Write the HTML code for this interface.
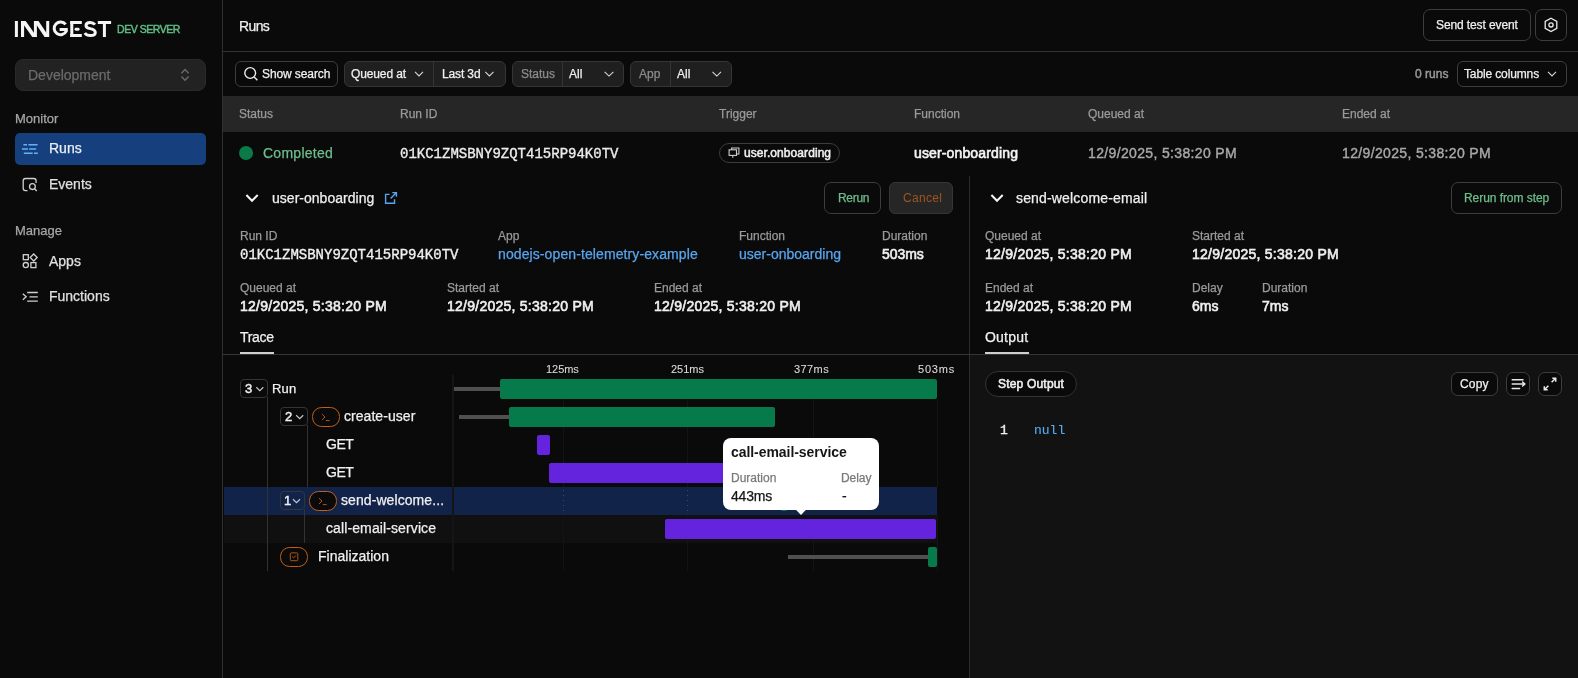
<!DOCTYPE html>
<html><head><meta charset="utf-8">
<style>
*{box-sizing:border-box;margin:0;padding:0}
html,body{width:1578px;height:678px;overflow:hidden;background:#0a0a0a;font-family:"Liberation Sans",sans-serif;color:#e5e5e5}
.a{position:absolute}
.t{position:absolute;white-space:nowrap;line-height:1;-webkit-text-stroke:0.25px currentColor}
.mono{font-family:"Liberation Mono",monospace;-webkit-text-stroke:0.35px currentColor}
.lbl{color:#9a9a9a;font-size:12px}
.val{color:#f0f0f0;font-size:14px;font-weight:400;-webkit-text-stroke:0.6px currentColor !important}
.btn{position:absolute;border:1px solid #3d3d3d;border-radius:7px;background:#0a0a0a}
.hl{position:absolute;background:#2c2c2c}
svg{position:absolute;overflow:visible}
</style></head><body><div style="position:absolute;left:0;top:0;width:1578px;height:678px;will-change:transform">

<!-- SIDEBAR -->
<div class="a" style="left:222px;top:0;width:1px;height:678px;background:#303030"></div>
<svg style="left:0;top:0" width="1" height="1"><g fill="#f5f5f5">
<rect x="14.9" y="21" width="3" height="16"/>
<rect x="21" y="21" width="3.1" height="16"/>
<path d="M21 21H25.7L36.9 37H32.3Z"/>
<rect x="33.9" y="21" width="3" height="16"/>
<path d="M33.9 21H38.5L49.2 37H44.6Z"/>
<rect x="46.2" y="21" width="3" height="16"/>
<rect x="70.3" y="21" width="3" height="16"/><rect x="70.3" y="21" width="11.5" height="3"/><rect x="70.3" y="34" width="11.5" height="3"/><rect x="74.6" y="27.8" width="5" height="2.9" rx="1.4"/>
<rect x="97.8" y="21" width="13.3" height="3"/><rect x="102.9" y="21" width="3" height="16"/>
</g><g fill="none" stroke="#f5f5f5" stroke-width="3">
<path d="M65.6 24.4A6.4 6.4 0 1 0 66.3 31.2V29.5H59.6"/>
<path d="M95 24.6Q93.2 22.4 90.2 22.4Q86 22.4 86 25.4Q86 27.8 90.2 28.6Q95.3 29.6 95.3 32.6Q95.3 35.6 90.4 35.6Q86.6 35.6 84.8 33"/>
</g></svg>
<div class="t" style="left:117px;top:23.5px;font-size:10.5px;color:#5fbf84;-webkit-text-stroke:0.45px currentColor;letter-spacing:-0.45px">DEV SERVER</div>

<div class="a" style="left:15px;top:59px;width:191px;height:32px;background:#222;border:1px solid #2a2a2a;border-radius:8px"></div>
<div class="t" style="left:28px;top:68px;font-size:14px;color:#6b6b6b">Development</div>
<svg style="left:0;top:0" width="1" height="1"><path d="M181.5 73.3L185 69.6L188.6 73.3M181.5 76.6L185 80.2L188.6 76.6" fill="none" stroke="#6a6a6a" stroke-width="1.4"/></svg>

<div class="t" style="left:15px;top:112px;font-size:13px;color:#a6a6a6">Monitor</div>
<div class="a" style="left:15px;top:133px;width:191px;height:32px;background:#163f7e;border-radius:5px"></div>
<svg style="left:0;top:0" width="1" height="1"><g stroke="#62b2f6" stroke-width="1.4" fill="none">
<path d="M23.4 144.7H27M28.4 144.7H37.6M22 149H28M29.2 149H36.2M23.8 153.2H32.7M34 153.2H37.8"/></g></svg>
<div class="t" style="left:49px;top:141px;font-size:14px;color:#e8eef6">Runs</div>

<svg style="left:0;top:0" width="1" height="1"><g stroke="#d0d0d0" stroke-width="1.3" fill="none">
<path d="M27.5 190.6H25.5Q23.2 190.6 23.2 188.3V180.8Q23.2 178.5 25.5 178.5H33.8Q36.1 178.5 36.1 180.8V183"/>
<circle cx="32.4" cy="186.6" r="2.9"/><path d="M34.5 188.7L36.8 191"/></g></svg>
<div class="t" style="left:49px;top:177px;font-size:14px;color:#e0e0e0">Events</div>

<div class="t" style="left:15px;top:224px;font-size:13px;color:#a6a6a6">Manage</div>
<svg style="left:0;top:0" width="1" height="1"><g stroke="#d0d0d0" stroke-width="1.3" fill="none">
<rect x="23.3" y="254.7" width="5" height="5"/><path d="M33.7 254L37.2 257.5L33.7 261L30.2 257.5Z"/>
<circle cx="25.8" cy="265.1" r="2.6"/><rect x="30.9" y="262.6" width="5" height="5"/></g></svg>
<div class="t" style="left:49px;top:254px;font-size:14px;color:#e0e0e0">Apps</div>

<svg style="left:0;top:0" width="1" height="1"><g stroke="#d0d0d0" stroke-width="1.3" fill="none">
<path d="M22.8 293.8L26.2 296.8L22.8 299.8M27.2 292.5H37.8M29.5 296.8H37.8M27.2 301.1H37.8"/></g></svg>
<div class="t" style="left:49px;top:289px;font-size:14px;color:#e0e0e0">Functions</div>

<!-- MAIN HEADER -->
<div class="t" style="left:239px;top:19px;font-size:14px;color:#f0f0f0;letter-spacing:-0.63px">Runs</div>
<div class="a" style="left:223px;top:51px;width:1355px;height:1px;background:#333"></div>
<div class="btn" style="left:1423px;top:9px;width:108px;height:32px"></div>
<div class="t" style="left:1436px;top:19px;font-size:12px;color:#f0f0f0;letter-spacing:-0.11px">Send test event</div>
<div class="btn" style="left:1535px;top:9px;width:32px;height:32px"></div>
<svg style="left:0;top:0" width="1" height="1"><g stroke="#ececec" stroke-width="1.3" fill="none">
<path d="M1551 18.3L1556.8 21.5V28.3L1551 31.5L1545.2 28.3V21.5Z"/><circle cx="1551" cy="24.9" r="2.1"/></g></svg>

<!-- FILTER BAR -->
<div class="btn" style="left:235px;top:61px;width:103px;height:26px;border-radius:6px"></div>
<svg style="left:0;top:0" width="1" height="1"><g stroke="#ececec" stroke-width="1.4" fill="none">
<circle cx="250.2" cy="73" r="5.4"/><path d="M254.2 77L257.4 80.2"/></g></svg>
<div class="t" style="left:262px;top:68px;font-size:12px;color:#f0f0f0;letter-spacing:-0.1px">Show search</div>

<div class="btn" style="left:344px;top:61px;width:162px;height:26px;border-radius:6px;background:#1f1f1f;border-color:#353535"></div>
<div class="a" style="left:433px;top:62px;width:1px;height:24px;background:#353535"></div>
<div class="t" style="left:351px;top:68px;font-size:12px;color:#f0f0f0;letter-spacing:-0.13px">Queued at</div>
<div class="t" style="left:442px;top:68px;font-size:12px;color:#f0f0f0;letter-spacing:-0.13px">Last 3d</div>

<div class="btn" style="left:512px;top:61px;width:112px;height:26px;border-radius:6px;background:#1f1f1f;border-color:#353535"></div>
<div class="a" style="left:562px;top:62px;width:1px;height:24px;background:#353535"></div>
<div class="t" style="left:521px;top:68px;font-size:12px;color:#8c8c8c">Status</div>
<div class="t" style="left:569px;top:68px;font-size:12px;color:#f0f0f0">All</div>

<div class="btn" style="left:630px;top:61px;width:102px;height:26px;border-radius:6px;background:#1f1f1f;border-color:#353535"></div>
<div class="a" style="left:670px;top:62px;width:1px;height:24px;background:#353535"></div>
<div class="t" style="left:639px;top:68px;font-size:12px;color:#8c8c8c">App</div>
<div class="t" style="left:677px;top:68px;font-size:12px;color:#f0f0f0">All</div>
<svg style="left:0;top:0" width="1" height="1"><g stroke="#d8d8d8" stroke-width="1.1" fill="none">
<path d="M415 71.9L419 75.9L423 71.9M485.3 71.9L489.4 75.9L493.5 71.9M604.6 71.9L609 76.1L613.4 71.9M712.5 71.9L716.8 76.1L721 71.9"/></g></svg>

<div class="t" style="left:1415px;top:68px;font-size:12px;color:#9a9a9a;-webkit-text-stroke:0.45px currentColor;letter-spacing:0.04px">0 runs</div>
<div class="btn" style="left:1457px;top:61px;width:110px;height:26px;border-radius:6px"></div>
<div class="t" style="left:1464px;top:68px;font-size:12px;color:#f0f0f0;letter-spacing:-0.13px">Table columns</div>
<svg style="left:0;top:0" width="1" height="1"><path d="M1548 71.9L1552 75.9L1556 71.9" fill="none" stroke="#d8d8d8" stroke-width="1.1"/></svg>

<!-- TABLE HEADER -->
<div class="a" style="left:223px;top:96px;width:1355px;height:36px;background:#262626"></div>
<div class="t lbl" style="left:239px;top:108px">Status</div>
<div class="t lbl" style="left:400px;top:108px">Run ID</div>
<div class="t lbl" style="left:719px;top:108px">Trigger</div>
<div class="t lbl" style="left:914px;top:108px">Function</div>
<div class="t lbl" style="left:1088px;top:108px">Queued at</div>
<div class="t lbl" style="left:1342px;top:108px">Ended at</div>

<!-- ROW -->
<div class="a" style="left:239px;top:146px;width:14px;height:14px;border-radius:50%;background:#0a7a47"></div>
<div class="t" style="left:263px;top:146px;font-size:14px;color:#6dbd8b;letter-spacing:0.26px">Completed</div>
<div class="t mono" style="left:400px;top:147px;font-size:14px;color:#ececec">01KC1ZMSBNY9ZQT415RP94K0TV</div>
<div class="a" style="left:719px;top:143px;width:121px;height:20px;border:1px solid #3d3d3d;border-radius:10px"></div>
<svg style="left:0;top:0" width="1" height="1"><g stroke="#d0d0d0" stroke-width="1.1" fill="none">
<path d="M731.6 149.8V148H738.9V154H736.5"/><rect x="729.1" y="149.8" width="7.4" height="5.6"/><path d="M732.8 155.4V157.8"/></g></svg>
<div class="t" style="left:744px;top:147px;font-size:12px;color:#f0f0f0;-webkit-text-stroke:0.5px currentColor;letter-spacing:0.07px">user.onboarding</div>
<div class="t" style="left:914px;top:146px;font-size:14px;color:#f5f5f5;-webkit-text-stroke:0.6px currentColor;letter-spacing:0.14px">user-onboarding</div>
<div class="t" style="left:1088px;top:146px;font-size:14px;color:#a8a8a8;-webkit-text-stroke:0.4px currentColor;letter-spacing:0.35px">12/9/2025, 5:38:20 PM</div>
<div class="t" style="left:1342px;top:146px;font-size:14px;color:#a8a8a8;-webkit-text-stroke:0.4px currentColor;letter-spacing:0.35px">12/9/2025, 5:38:20 PM</div>

<!-- DIVIDER -->
<div class="a" style="left:969px;top:176px;width:1px;height:502px;background:#2c2c2c"></div>

<!-- LEFT DETAIL -->
<svg style="left:0;top:0" width="1" height="1"><path d="M246.4 195L252 200.8L257.7 195" fill="none" stroke="#f5f5f5" stroke-width="2"/></svg>
<div class="t" style="left:272px;top:191px;font-size:14px;color:#f0f0f0;letter-spacing:0.02px">user-onboarding</div>
<svg style="left:0;top:0" width="1" height="1"><g stroke="#58a6ef" stroke-width="1.4" fill="none">
<path d="M389.5 194.4H385.6V203.3H394.5V199.3M390.6 198.4L396.2 192.8M392.3 192.6H396.4V196.7"/></g></svg>
<div class="btn" style="left:824px;top:182px;width:57px;height:32px"></div>
<div class="t" style="left:838px;top:192px;font-size:12px;color:#6dbd8b;letter-spacing:-0.3px">Rerun</div>
<div class="a" style="left:889px;top:182px;width:64px;height:32px;background:#262626;border:1px solid #363636;border-radius:6px"></div>
<div class="t" style="left:903px;top:192px;font-size:12px;color:#a0541f;-webkit-text-stroke:0px;letter-spacing:0.3px">Cancel</div>

<div class="t lbl" style="left:240px;top:230px">Run ID</div>
<div class="t mono" style="left:240px;top:248px;font-size:14px;color:#f0f0f0">01KC1ZMSBNY9ZQT415RP94K0TV</div>
<div class="t lbl" style="left:498px;top:230px">App</div>
<div class="t" style="left:498px;top:247px;font-size:14px;color:#58a6ef;letter-spacing:0.1px">nodejs-open-telemetry-example</div>
<div class="t lbl" style="left:739px;top:230px">Function</div>
<div class="t" style="left:739px;top:247px;font-size:14px;color:#58a6ef;letter-spacing:0.0px">user-onboarding</div>
<div class="t lbl" style="left:882px;top:230px">Duration</div>
<div class="t val" style="left:882px;top:247px;letter-spacing:-0.05px">503ms</div>

<div class="t lbl" style="left:240px;top:282px">Queued at</div>
<div class="t val" style="left:240px;top:299px;letter-spacing:0.25px">12/9/2025, 5:38:20 PM</div>
<div class="t lbl" style="left:447px;top:282px">Started at</div>
<div class="t val" style="left:447px;top:299px;letter-spacing:0.25px">12/9/2025, 5:38:20 PM</div>
<div class="t lbl" style="left:654px;top:282px">Ended at</div>
<div class="t val" style="left:654px;top:299px;letter-spacing:0.25px">12/9/2025, 5:38:20 PM</div>

<div class="t" style="left:240px;top:330px;font-size:14px;color:#f0f0f0;letter-spacing:-0.3px">Trace</div>
<div class="a" style="left:223px;top:354px;width:1355px;height:1px;background:#353535"></div>
<div class="a" style="left:240px;top:352px;width:34px;height:2px;background:#cfcfcf"></div>

<!-- RIGHT DETAIL -->
<svg style="left:0;top:0" width="1" height="1"><path d="M991.4 195L997 200.8L1002.7 195" fill="none" stroke="#f5f5f5" stroke-width="2"/></svg>
<div class="t" style="left:1016px;top:191px;font-size:14px;color:#f0f0f0;letter-spacing:0.16px">send-welcome-email</div>
<div class="btn" style="left:1451px;top:182px;width:111px;height:32px"></div>
<div class="t" style="left:1464px;top:192px;font-size:12px;color:#6dbd8b;letter-spacing:-0.06px">Rerun from step</div>

<div class="t lbl" style="left:985px;top:230px">Queued at</div>
<div class="t val" style="left:985px;top:247px;letter-spacing:0.25px">12/9/2025, 5:38:20 PM</div>
<div class="t lbl" style="left:1192px;top:230px">Started at</div>
<div class="t val" style="left:1192px;top:247px;letter-spacing:0.25px">12/9/2025, 5:38:20 PM</div>
<div class="t lbl" style="left:985px;top:282px">Ended at</div>
<div class="t val" style="left:985px;top:299px;letter-spacing:0.25px">12/9/2025, 5:38:20 PM</div>
<div class="t lbl" style="left:1192px;top:282px">Delay</div>
<div class="t val" style="left:1192px;top:299px">6ms</div>
<div class="t lbl" style="left:1262px;top:282px">Duration</div>
<div class="t val" style="left:1262px;top:299px">7ms</div>

<div class="t" style="left:985px;top:330px;font-size:14px;color:#f0f0f0;letter-spacing:0.2px">Output</div>
<div class="a" style="left:985px;top:352px;width:44px;height:2px;background:#cfcfcf"></div>

<!-- OUTPUT AREA -->
<div class="a" style="left:970px;top:355px;width:608px;height:323px;background:#121212"></div>
<div class="a" style="left:985px;top:371px;width:92px;height:26px;background:#0a0a0a;border:1px solid #333;border-radius:13px"></div>
<div class="t" style="left:998px;top:378px;font-size:12px;color:#f0f0f0;-webkit-text-stroke:0.55px currentColor;letter-spacing:0.19px">Step Output</div>
<div class="btn" style="left:1451px;top:372px;width:47px;height:24px;border-radius:7px"></div>
<div class="t" style="left:1460px;top:378px;font-size:12px;color:#f0f0f0;letter-spacing:0.16px">Copy</div>
<div class="btn" style="left:1506px;top:372px;width:24px;height:24px;border-radius:7px"></div>
<div class="btn" style="left:1538px;top:372px;width:24px;height:24px;border-radius:7px"></div>
<svg style="left:0;top:0" width="1" height="1"><g stroke="#e8e8e8" stroke-width="1.5" fill="none" stroke-linecap="round">
<path d="M1512.2 379.7H1523M1512.2 384H1524.6M1512.2 388.4H1519.6M1522.6 382L1524.8 384L1522.6 386"/>
<path stroke-linecap="butt" d="M1551.6 382.3L1555.4 378.5M1552.3 378.3H1555.7V381.7M1548.4 385.7L1544.6 389.5M1544.3 386.3V389.7H1547.7"/></g></svg>
<div class="t mono" style="left:1000px;top:424px;font-size:13px;color:#f0f0f0">1</div>
<div class="t mono" style="left:1034px;top:424px;font-size:13px;color:#5aaaf2;-webkit-text-stroke:0.1px currentColor">null</div>

<!-- TRACE -->
<div class="t" style="left:546px;top:364px;font-size:11px;color:#d8d8d8;-webkit-text-stroke:0.1px currentColor;letter-spacing:-0.05px">125ms</div>
<div class="t" style="left:671px;top:364px;font-size:11px;color:#d8d8d8;-webkit-text-stroke:0.1px currentColor;letter-spacing:0px">251ms</div>
<div class="t" style="left:794px;top:364px;font-size:11px;color:#d8d8d8;-webkit-text-stroke:0.1px currentColor;letter-spacing:0.42px">377ms</div>
<div class="t" style="left:918px;top:364px;font-size:11px;color:#d8d8d8;-webkit-text-stroke:0.1px currentColor;letter-spacing:0.8px">503ms</div>

<!-- highlighted rows -->
<div class="a" style="left:224px;top:487px;width:713px;height:28px;background:#12234a"></div>
<div class="a" style="left:224px;top:515px;width:713px;height:28px;background:#101010"></div>

<!-- grid -->
<div class="a" style="left:452px;top:375px;width:2px;height:196px;background:#151515"></div>
<div class="a" style="left:563px;top:399px;width:1px;height:88px;background:#141414"></div>
<div class="a" style="left:687px;top:399px;width:1px;height:88px;background:#141414"></div>
<div class="a" style="left:813px;top:399px;width:1px;height:88px;background:#141414"></div>
<div class="a" style="left:937px;top:399px;width:1px;height:88px;background:#141414"></div>
<div class="a" style="left:563px;top:515px;width:1px;height:56px;background:#141414"></div>
<div class="a" style="left:687px;top:515px;width:1px;height:56px;background:#141414"></div>
<div class="a" style="left:813px;top:515px;width:1px;height:56px;background:#141414"></div>
<div class="a" style="left:937px;top:515px;width:1px;height:56px;background:#141414"></div>
<div class="a" style="left:563px;top:490px;width:1px;height:24px;background:repeating-linear-gradient(#3a4a6a 0 1px,transparent 1px 5px)"></div>
<div class="a" style="left:687px;top:490px;width:1px;height:24px;background:repeating-linear-gradient(#3a4a6a 0 1px,transparent 1px 5px)"></div>
<!-- bars -->
<div class="a" style="left:454px;top:387px;width:46px;height:4px;background:#505050"></div>
<div class="a" style="left:500px;top:379px;width:437px;height:20px;background:#077a4b;border-radius:2px"></div>
<div class="a" style="left:459px;top:415px;width:50px;height:4px;background:#505050"></div>
<div class="a" style="left:509px;top:407px;width:266px;height:20px;background:#077a4b;border-radius:2px"></div>
<div class="a" style="left:537px;top:435px;width:13px;height:20px;background:#6424de;border-radius:2px"></div>
<div class="a" style="left:549px;top:463px;width:200px;height:20px;background:#6424de;border-radius:2px"></div>
<div class="a" style="left:781px;top:491px;width:6px;height:20px;background:#077a4b;border-radius:2px"></div>
<div class="a" style="left:665px;top:519px;width:271px;height:20px;background:#6424de;border-radius:2px"></div>
<div class="a" style="left:788px;top:555px;width:141px;height:4px;background:#505050"></div>
<div class="a" style="left:928px;top:547px;width:9px;height:20px;background:#077a4b;border-radius:2px"></div>

<!-- tree lines -->
<div class="a" style="left:267px;top:397px;width:1px;height:174px;background:#333"></div>
<div class="a" style="left:307px;top:425px;width:1px;height:62px;background:#333"></div>
<div class="a" style="left:304px;top:509px;width:1px;height:34px;background:#333"></div>

<!-- Run -->
<div class="a" style="left:240px;top:379px;width:28px;height:19px;border:1px solid #353535;border-radius:4px"></div>
<div class="t" style="left:245px;top:382px;font-size:13px;color:#f0f0f0;-webkit-text-stroke:0.45px currentColor">3</div>
<div class="t" style="left:272px;top:382px;font-size:13px;color:#f0f0f0;letter-spacing:0.2px">Run</div>
<!-- create-user -->
<div class="a" style="left:280px;top:407px;width:28px;height:19px;border:1px solid #353535;border-radius:4px"></div>
<div class="t" style="left:285px;top:410px;font-size:13px;color:#f0f0f0;-webkit-text-stroke:0.45px currentColor">2</div>
<div class="a" style="left:312px;top:407px;width:28px;height:20px;border:1.3px solid #c25f14;border-radius:9.5px;background:#0a0a0a"></div>
<div class="t" style="left:344px;top:409px;font-size:14px;color:#f0f0f0;letter-spacing:0.05px">create-user</div>
<div class="t" style="left:326px;top:437px;font-size:14px;color:#f0f0f0;letter-spacing:-0.5px">GET</div>
<div class="t" style="left:326px;top:465px;font-size:14px;color:#f0f0f0;letter-spacing:-0.5px">GET</div>
<!-- send-welcome -->
<div class="a" style="left:280px;top:491px;width:25px;height:19px;border:1px solid #353535;border-radius:4px"></div>
<div class="t" style="left:284px;top:494px;font-size:13px;color:#f0f0f0;-webkit-text-stroke:0.45px currentColor">1</div>
<div class="a" style="left:309px;top:491px;width:28px;height:20px;border:1.3px solid #c25f14;border-radius:9.5px;background:#0a0a0a"></div>
<div class="t" style="left:341px;top:493px;font-size:14px;color:#f0f0f0;letter-spacing:0.08px">send-welcome...</div>
<div class="t" style="left:326px;top:521px;font-size:14px;color:#f0f0f0;letter-spacing:0.11px">call-email-service</div>
<!-- finalization -->
<div class="a" style="left:280px;top:547px;width:28px;height:20px;border:1.3px solid #c25f14;border-radius:9.5px;background:#0a0a0a"></div>
<div class="t" style="left:318px;top:549px;font-size:14px;color:#f0f0f0;letter-spacing:0.01px">Finalization</div>

<svg style="left:0;top:0" width="1" height="1">
<g stroke="#c4c4c4" stroke-width="1.25" fill="none"><path d="M256.3 387.2L259.8 390.6L263.3 387.2M296.2 415.2L299.7 418.6L303.2 415.2M293 499.2L296.5 502.6L300 499.2"/></g>
<g stroke="#c25f14" stroke-width="0.9" fill="none">
<path d="M321.9 414L325 417L321.9 420M325.8 420.6H329.7"/>
<path d="M318.9 498L322 501L318.9 504M322.8 504.6H326.7"/>
<rect x="290.3" y="552.9" width="7.5" height="7.8" rx="1"/><path d="M292.2 556.6L293.6 557.9L296 555.4"/></g>
</svg>

<!-- TOOLTIP -->
<div class="a" style="left:723px;top:438px;width:156px;height:72px;background:#fff;border-radius:8px"></div>
<svg style="left:0;top:0" width="1" height="1"><path d="M795.7 509.5L801 515L806.2 509.5Z" fill="#fff"/></svg>
<div class="t" style="left:731px;top:445px;font-size:14px;font-weight:700;color:#151515;-webkit-text-stroke:0px;letter-spacing:-0.06px">call-email-service</div>
<div class="t" style="left:731px;top:472px;font-size:12px;color:#7a7a7a">Duration</div>
<div class="t" style="left:841px;top:472px;font-size:12px;color:#7a7a7a;letter-spacing:-0.06px">Delay</div>
<div class="t" style="left:731px;top:489px;font-size:14px;color:#151515;letter-spacing:-0.2px">443ms</div>
<div class="t" style="left:842px;top:489px;font-size:14px;color:#151515">-</div>

</div></body></html>
